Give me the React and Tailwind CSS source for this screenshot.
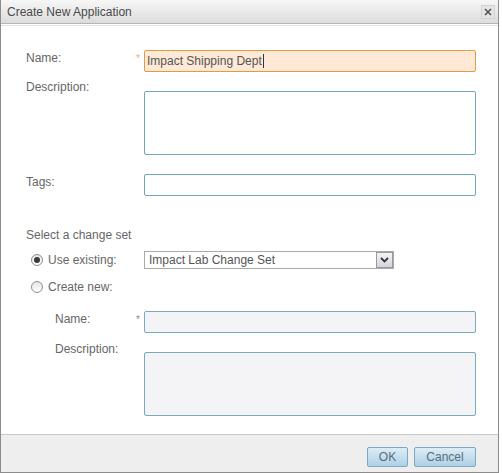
import React from 'react';

const font = { fontFamily: '"Liberation Sans", Arial, sans-serif' };

function Radio({ checked }) {
  return (
    <span className="relative inline-block h-[12px] w-[12px] rounded-full border border-[#8e8e8e] bg-gradient-to-b from-[#e6e6e6] to-[#ffffff]">
      {checked && (
        <span className="absolute left-[2px] top-[2px] h-[6px] w-[6px] rounded-full bg-[#3a3a3a]" />
      )}
    </span>
  );
}

function FieldLabel({ children, indent }) {
  return (
    <div className={indent ? 'w-[110px] pl-[29px] leading-4' : 'w-[110px] leading-4'}>
      {children}
    </div>
  );
}

function Star({ color }) {
  return (
    <div className={`w-[8px] pt-[3px] text-[10px] leading-3 ${color}`}>*</div>
  );
}

export default function App() {
  return (
    <div style={font} className="flex h-[473px] w-[499px] flex-col border-x border-b border-[#8c8c8c] bg-white text-[12px] text-[#666]">
      {/* Title bar */}
      <div className="flex h-[24px] items-center justify-between border-b border-[#b4b4b4] bg-gradient-to-b from-[#f7f7f7] to-[#dcdcdc] pl-[6px] pr-[3px]">
        <span className="text-[12px] text-[#4a4a4a]">Create New Application</span>
        <span className="flex h-[14px] w-[14px] items-center justify-center border border-[#d2d2d2] bg-[#e4e4e4]">
          <svg width="8" height="8" viewBox="0 0 8 8">
            <path d="M1 1L7 7M7 1L1 7" stroke="#555" strokeWidth="1.6" />
          </svg>
        </span>
      </div>
      <div className="h-[2px] border-b border-[#e2e2e2] bg-white" />

      {/* Body */}
      <div className="flex-1 pl-[25px] pt-[24px]">
        <div className="flex items-start">
          <FieldLabel>Name:</FieldLabel>
          <Star color="text-[#f2b06a]" />
          <div className="flex h-[22px] w-[332px] items-center rounded-[2px] border border-[#e59a45] bg-[#fde9d5] pl-[2px] text-[12px] text-[#555]">
            Impact Shipping Dept
            <span className="ml-[1px] h-[14px] w-px bg-[#333]" />
          </div>
        </div>

        <div className="mt-[7px] flex items-start">
          <FieldLabel>Description:</FieldLabel>
          <div className="w-[8px]" />
          <div className="pt-[12px]">
            <div className="h-[64px] w-[332px] rounded-[2px] border border-[#6fa7b8] bg-white" />
          </div>
        </div>

        <div className="mt-[19px] flex items-start">
          <FieldLabel>Tags:</FieldLabel>
          <div className="w-[8px]" />
          <div className="h-[22px] w-[332px] rounded-[2px] border border-[#6fa7b8] bg-white" />
        </div>

        <div className="mt-[31px] leading-4">Select a change set</div>

        <div className="mt-[8px] flex h-[18px] items-center">
          <div className="flex w-[118px] items-center pl-[5px]">
            <Radio checked />
            <span className="ml-[5px]">Use existing:</span>
          </div>
          <div className="flex h-[18px] w-[250px] items-center justify-between border border-[#a9a9a9] bg-white pl-[4px]">
            <span className="text-[#555]">Impact Lab Change Set</span>
            <span className="flex h-[16px] w-[17px] items-center justify-center border border-[#9a9a9a] bg-gradient-to-b from-[#f3f3f3] to-[#d4d6dc]">
              <svg width="9" height="6" viewBox="0 0 9 6">
                <path d="M1 1L4.5 4.5L8 1" stroke="#2e3440" strokeWidth="1.8" fill="none" />
              </svg>
            </span>
          </div>
        </div>

        <div className="mt-[9px] flex h-[18px] items-center pl-[5px]">
          <Radio />
          <span className="ml-[5px]">Create new:</span>
        </div>

        <div className="mt-[15px] flex items-start">
          <FieldLabel indent>Name:</FieldLabel>
          <Star color="text-[#888]" />
          <div className="h-[22px] w-[332px] rounded-[2px] border border-[#7aaabb] bg-[#f4f4f6]" />
        </div>

        <div className="mt-[8px] flex items-start">
          <FieldLabel indent>Description:</FieldLabel>
          <div className="w-[8px]" />
          <div className="pt-[11px]">
            <div className="h-[64px] w-[332px] rounded-[2px] border border-[#7aaabb] bg-[#f4f4f6]" />
          </div>
        </div>
      </div>

      {/* Footer */}
      <div className="flex h-[38px] items-start justify-end gap-[6px] border-t border-[#c9c9c9] bg-[#eeeeee] pr-[22px] pt-[12px]">
        <button className="h-[20px] w-[41px] rounded-[2px] border border-[#7da7c2] bg-gradient-to-b from-[#dcedf7] to-[#aed0e5] text-[12px] text-[#5a6e7c]">
          OK
        </button>
        <button className="h-[20px] w-[62px] rounded-[2px] border border-[#7da7c2] bg-gradient-to-b from-[#dcedf7] to-[#aed0e5] text-[12px] text-[#5a6e7c]">
          Cancel
        </button>
      </div>
    </div>
  );
}
